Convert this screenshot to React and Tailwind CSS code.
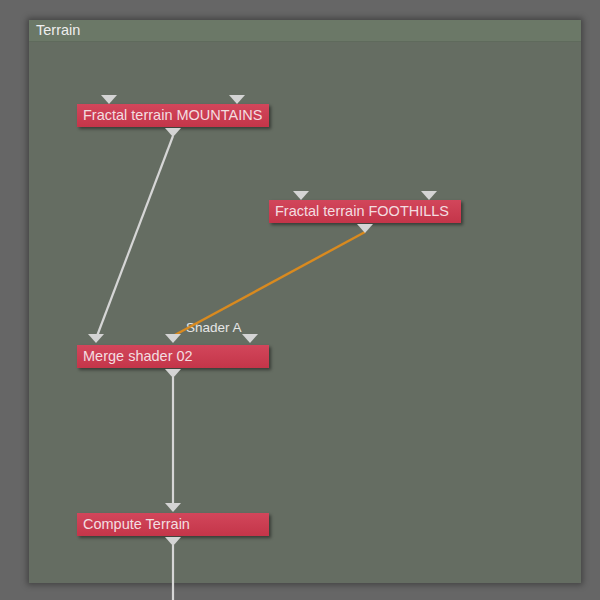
import React from 'react';

const font = { fontFamily: '"Liberation Sans", Arial, sans-serif' };

// node boxes, coordinates relative to the panel
const nodes = [
  { label: 'Fractal terrain MOUNTAINS', x: 48, y: 84 },
  { label: 'Fractal terrain FOOTHILLS', x: 240, y: 180 },
  { label: 'Merge shader 02', x: 48, y: 325 },
  { label: 'Compute Terrain', x: 48, y: 493 },
];

// sockets in page coordinates: [cx, top]
const sockets = [
  [109, 95], [237, 95], [173, 128],
  [301, 191], [429, 191], [365, 224],
  [96, 334], [173, 334], [250, 334], [173, 369],
  [173, 503], [173, 537],
];

const Tri = ({ cx, y }) => (
  <polygon points={`${cx - 8},${y} ${cx + 8},${y} ${cx},${y + 9}`} fill="#d4d4d4" />
);

const Node = ({ label, x, y }) => (
  <div
    className="absolute flex h-[23px] w-[192px] items-center bg-gradient-to-b from-[#d2465b] to-[#c43549] pl-[6px] text-[14.5px] text-[#f3dde0] shadow-[2px_2px_3px_rgba(0,0,0,0.45)]"
    style={{ left: x, top: y }}
  >
    {label}
  </div>
);

export default function App() {
  return (
    <div className="relative h-[600px] w-[600px] overflow-hidden bg-[#666666]" style={font}>
      <div className="pl-[29px] pt-[20px]">
        <div className="relative flex h-[563px] w-[552px] flex-col bg-[#656d62] shadow-[0_0_6px_2px_rgba(0,0,0,0.35)]">
          <div className="flex h-[22px] items-center border-b border-[#5f6a5c] bg-[#6b7867] pl-[7px] text-[14.5px] text-[#eeeeee]">
            Terrain
          </div>
          <div className="flex-1" />
          {nodes.map((n) => (
            <Node key={n.label} {...n} />
          ))}
          <div className="absolute left-[157px] top-[298px] text-[13.5px] text-[#e6e6e6]">Shader A</div>
        </div>
      </div>

      <svg className="pointer-events-none absolute left-0 top-0" width="600" height="600">
        <line x1="173" y1="136" x2="97" y2="336" stroke="#d6d6d6" strokeWidth="2.2" />
        <line x1="365" y1="232" x2="173" y2="336" stroke="#d98a1f" strokeWidth="2.4" />
        <line x1="173" y1="377" x2="173" y2="505" stroke="#d6d6d6" strokeWidth="2.2" />
        <line x1="173" y1="545" x2="173" y2="600" stroke="#d6d6d6" strokeWidth="2.2" />
        {sockets.map(([cx, y], i) => (
          <Tri key={i} cx={cx} y={y} />
        ))}
      </svg>
    </div>
  );
}
